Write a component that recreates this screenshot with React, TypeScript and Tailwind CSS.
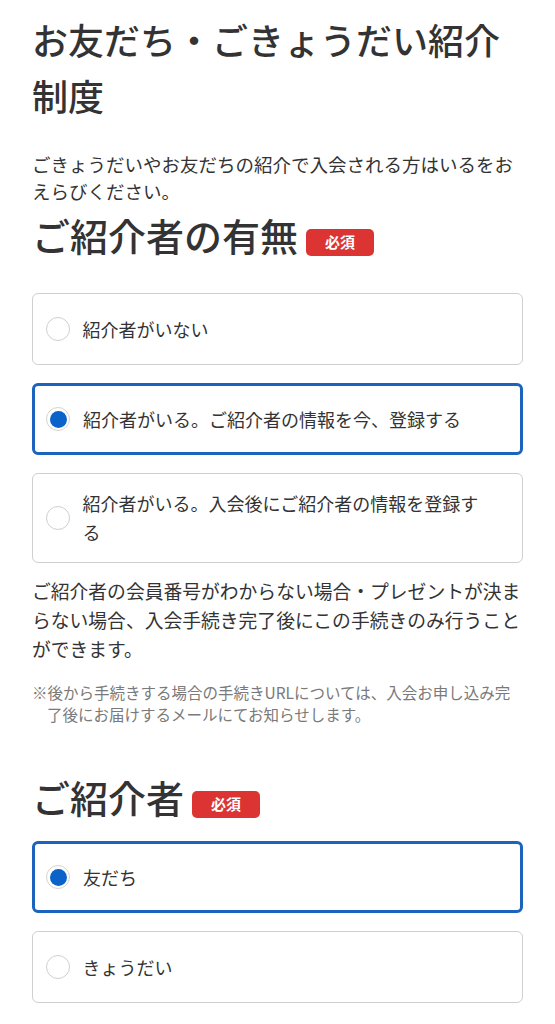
import { useState } from 'react';

const font = { fontFamily: '"Noto Sans CJK JP", "Noto Sans", sans-serif' };

function Badge() {
  return (
    <span className="mb-[3px] ml-[8px] inline-flex h-[27px] w-[68px] items-center justify-center rounded-[5px] bg-[#dc3333] text-[15px] font-bold text-white">
      必須
    </span>
  );
}

type Option = { value: string; label: string };

function RadioCard({ option, checked, onSelect }: { option: Option; checked: boolean; onSelect: () => void }) {
  return (
    <button
      type="button"
      onClick={onSelect}
      className={
        checked
          ? 'flex min-h-[72px] w-full items-center gap-[13px] rounded-[6px] border-[3px] border-[#1b63bd] bg-white py-[13.5px] pl-[11px] pr-[28px] text-left'
          : 'flex min-h-[72px] w-full items-center gap-[13px] rounded-[6px] border-[1.5px] border-[#cfcfcf] bg-white py-[15px] pl-[12.5px] pr-[29.5px] text-left'
      }
    >
      <span
        className={
          checked
            ? 'flex h-[24px] w-[24px] shrink-0 items-center justify-center rounded-full border-[1.5px] border-[#d9d2cb] bg-white'
            : 'flex h-[24px] w-[24px] shrink-0 items-center justify-center rounded-full border-[1.5px] border-[#cfcfcf] bg-white'
        }
      >
        {checked && <span className="h-[17px] w-[17px] rounded-full bg-[#0b62c9]" />}
      </span>
      <span className="text-[18px] leading-[29px] text-[#333]">{option.label}</span>
    </button>
  );
}

function RadioGroup({ options, value, onChange }: { options: Option[]; value: string; onChange: (v: string) => void }) {
  return (
    <div className="flex flex-col gap-[18px]">
      {options.map(o => (
        <RadioCard key={o.value} option={o} checked={value === o.value} onSelect={() => onChange(o.value)} />
      ))}
    </div>
  );
}

const hasReferrer: Option[] = [
  { value: 'none', label: '紹介者がいない' },
  { value: 'now', label: '紹介者がいる。ご紹介者の情報を今、登録する' },
  { value: 'later', label: '紹介者がいる。入会後にご紹介者の情報を登録する' },
];

const referrerType: Option[] = [
  { value: 'friend', label: '友だち' },
  { value: 'sibling', label: 'きょうだい' },
];

export default function App() {
  const [has, setHas] = useState('now');
  const [type, setType] = useState('friend');

  return (
    <div className="min-h-screen bg-white px-[32px] pt-[11px] text-[#333]" style={font}>
      <h1 className="text-[36px] font-medium leading-[56px] text-[#333]">お友だち・ごきょうだい紹介制度</h1>

      <p className="mt-[28px] text-[18.5px] leading-[27px] text-[#333]">
        ごきょうだいやお友だちの紹介で入会される方はいるをおえらびください。
      </p>

      <div className="mt-[6px] flex items-end">
        <h2 className="text-[38px] font-medium leading-[48px]">ご紹介者の有無</h2>
        <Badge />
      </div>

      <div className="mt-[34px]">
        <RadioGroup options={hasReferrer} value={has} onChange={setHas} />
      </div>

      <p className="mt-[13px] text-[18.8px] leading-[29px] text-[#333]">
        ご紹介者の会員番号がわからない場合・プレゼントが決まらない場合、入会手続き完了後にこの手続きのみ行うことができます。
      </p>

      <p className="mt-[18px] pl-[15px] -indent-[15px] text-[15.5px] leading-[22px] text-[#7a7a7a]">
        ※後から手続きする場合の手続きURLについては、入会お申し込み完了後にお届けするメールにてお知らせします。
      </p>

      <div className="mt-[48px] flex items-end">
        <h2 className="text-[38px] font-medium leading-[48px]">ご紹介者</h2>
        <Badge />
      </div>

      <div className="mt-[20px] pb-[24px]">
        <RadioGroup options={referrerType} value={type} onChange={setType} />
      </div>
    </div>
  );
}
